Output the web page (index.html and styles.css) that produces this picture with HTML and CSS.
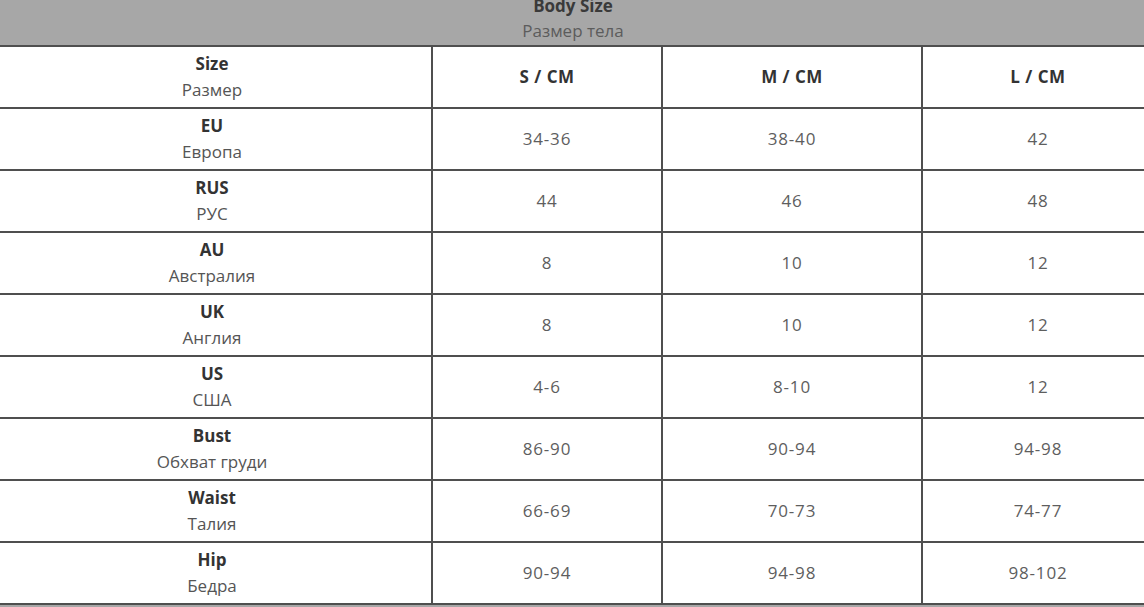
FILE: index.html
```html
<!DOCTYPE html>
<html lang="ru">
<head>
<meta charset="utf-8">
<title>Body Size</title>
<link rel="stylesheet" href="styles.css">
</head>
<body>
<div class="chart">
  <div class="title cell-full">
    <div class="en">Body Size</div>
    <div class="ru">Размер тела</div>
  </div>

  <div class="cell label"><b>Size</b><span>Размер</span></div>
  <div class="cell head">S / CM</div>
  <div class="cell head">M / CM</div>
  <div class="cell head">L / CM</div>

  <div class="cell label"><b>EU</b><span>Европа</span></div>
  <div class="cell val">34-36</div>
  <div class="cell val">38-40</div>
  <div class="cell val">42</div>

  <div class="cell label"><b>RUS</b><span>РУС</span></div>
  <div class="cell val">44</div>
  <div class="cell val">46</div>
  <div class="cell val">48</div>

  <div class="cell label"><b>AU</b><span>Австралия</span></div>
  <div class="cell val">8</div>
  <div class="cell val">10</div>
  <div class="cell val">12</div>

  <div class="cell label"><b>UK</b><span>Англия</span></div>
  <div class="cell val">8</div>
  <div class="cell val">10</div>
  <div class="cell val">12</div>

  <div class="cell label"><b>US</b><span>США</span></div>
  <div class="cell val">4-6</div>
  <div class="cell val">8-10</div>
  <div class="cell val">12</div>

  <div class="cell label"><b>Bust</b><span>Обхват груди</span></div>
  <div class="cell val">86-90</div>
  <div class="cell val">90-94</div>
  <div class="cell val">94-98</div>

  <div class="cell label"><b>Waist</b><span>Талия</span></div>
  <div class="cell val">66-69</div>
  <div class="cell val">70-73</div>
  <div class="cell val">74-77</div>

  <div class="cell label"><b>Hip</b><span>Бедра</span></div>
  <div class="cell val">90-94</div>
  <div class="cell val">94-98</div>
  <div class="cell val">98-102</div>

  <div class="foot cell-full"></div>
</div>
</body>
</html>
```
FILE: styles.css
```css
html, body {
  margin: 0;
  padding: 0;
  background: #fff;
  overflow: hidden;
}
body {
  font-family: "Open Sans", "Noto Sans", sans-serif;
  font-size: 17px;
  color: #555;
}
.chart {
  display: grid;
  width: 1160px;
  grid-template-columns: 438px 228px 258px 1fr;
  grid-template-rows: 52px repeat(9, 60px) 20px;
  gap: 2px;
  background: #4f4f4f;
  margin-top: -7px;
  margin-left: -7px;
}
.cell-full {
  grid-column: 1 / -1;
}
.title {
  background: #a7a7a7;
  text-align: center;
  line-height: 25px;
}
.title .en {
  font-weight: 700;
  color: #3a3a3a;
}
.title .ru {
  color: #5c5c5c;
}
.cell {
  background: #fff;
  display: flex;
  flex-direction: column;
  align-items: center;
  justify-content: center;
  line-height: 26px;
  text-align: center;
}
.label b {
  font-weight: 700;
  color: #333;
}
.label span {
  color: #555;
}
.head {
  font-weight: 700;
  color: #333;
  letter-spacing: 0.5px;
}
.val {
  color: #5e5e5e;
  letter-spacing: 0.8px;
}
.foot {
  background: #a7a7a7;
}
```
